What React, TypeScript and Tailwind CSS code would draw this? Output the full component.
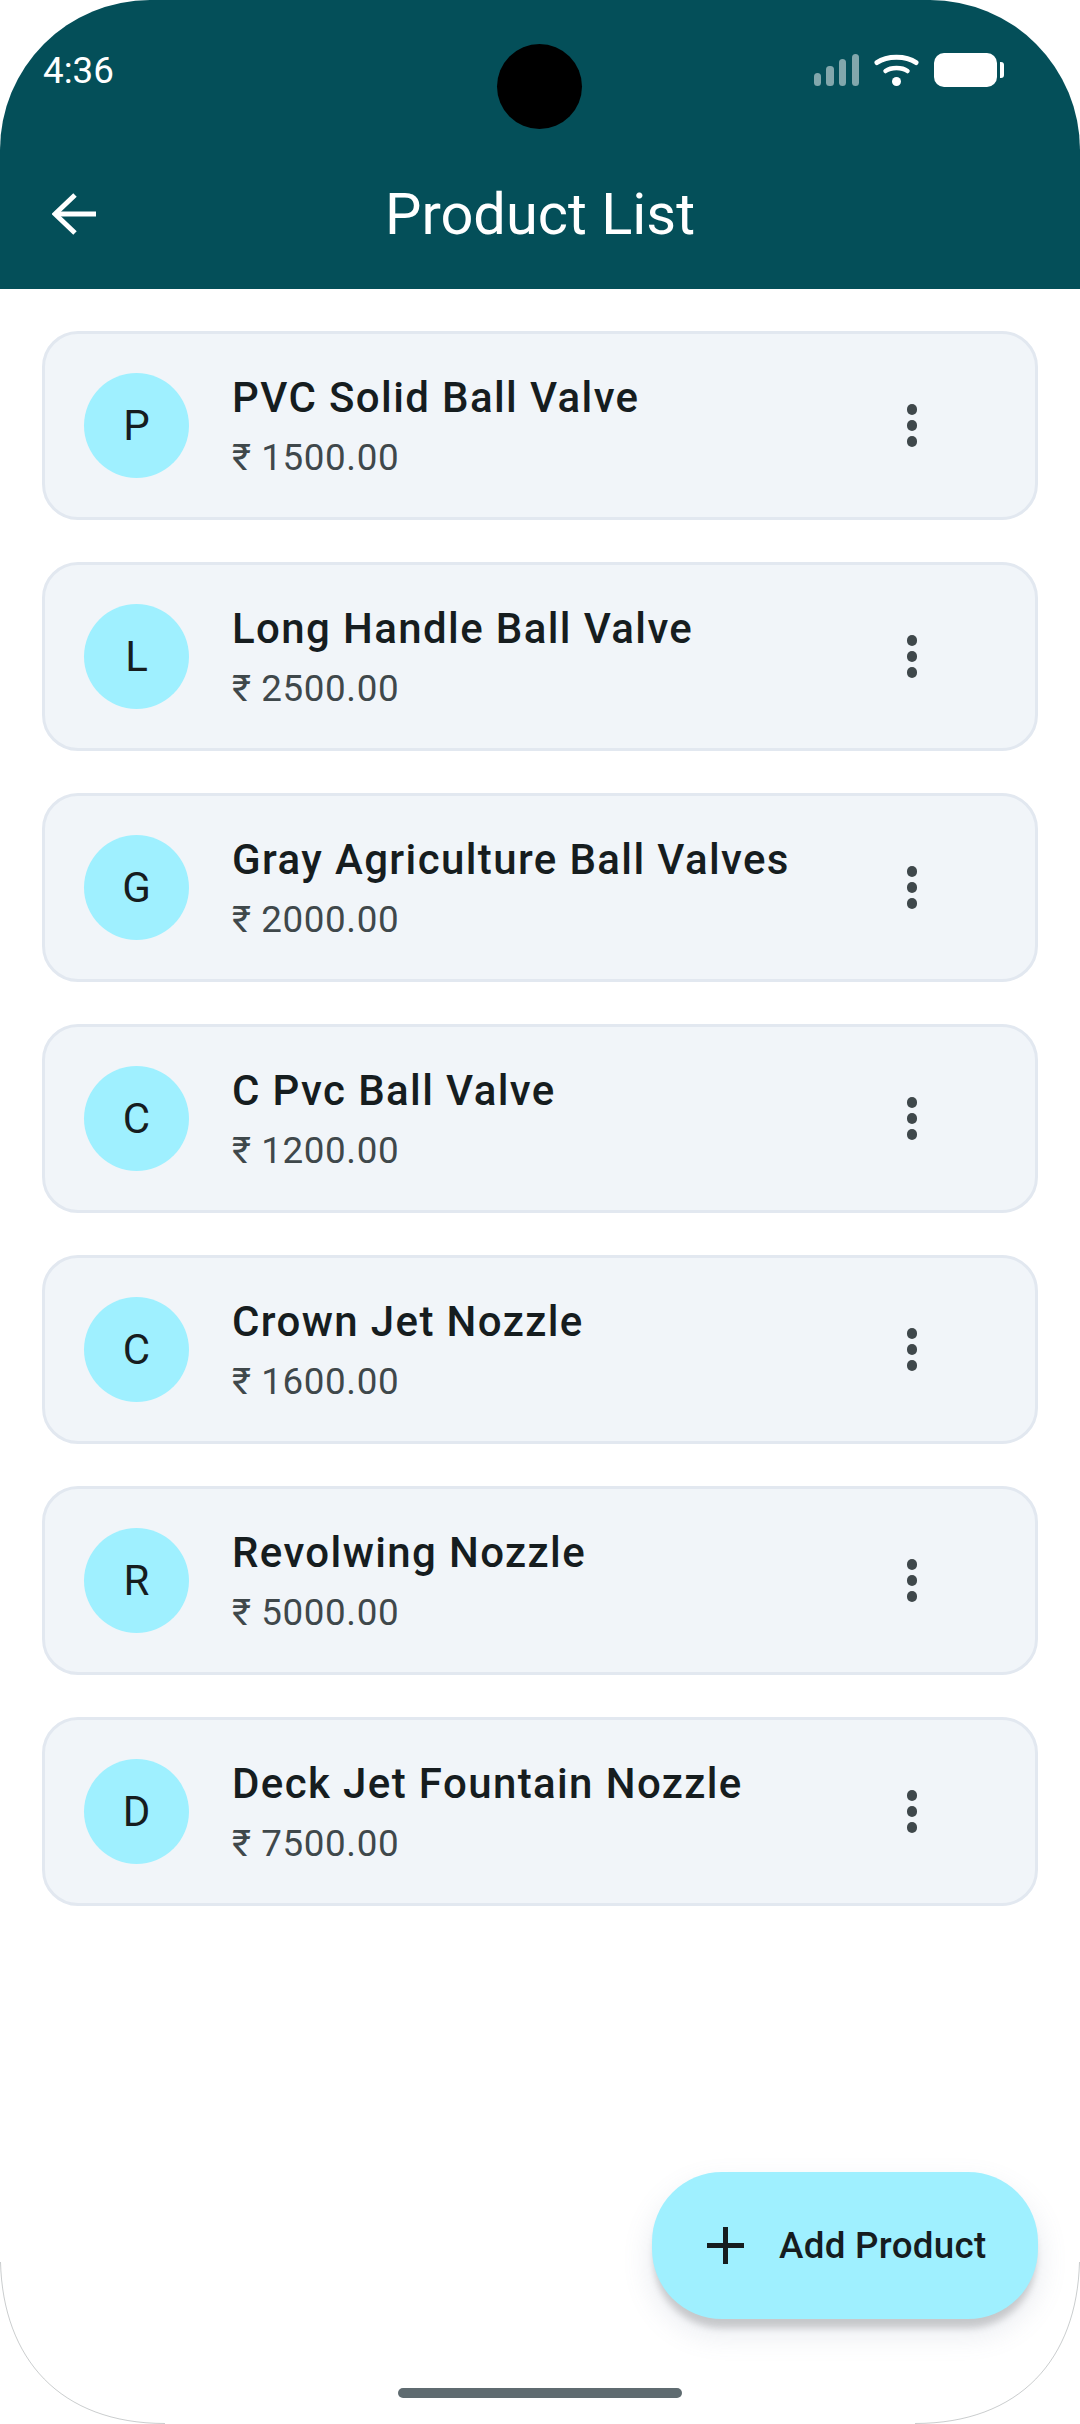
const products = [
  { l: "P", n: "PVC Solid Ball Valve", p: "1500.00" },
  { l: "L", n: "Long Handle Ball Valve", p: "2500.00" },
  { l: "G", n: "Gray Agriculture Ball Valves", p: "2000.00" },
  { l: "C", n: "C Pvc Ball Valve", p: "1200.00" },
  { l: "C", n: "Crown Jet Nozzle", p: "1600.00" },
  { l: "R", n: "Revolwing Nozzle", p: "5000.00" },
  { l: "D", n: "Deck Jet Fountain Nozzle", p: "7500.00" },
];

function StatusIcons() {
  return (
    <svg width="191" height="36" viewBox="0 0 191 36" className="block">
      <g fill="#ffffff" fillOpacity="0.5">
        <rect x="0" y="20" width="7" height="13" rx="3.5" />
        <rect x="12" y="13" width="8" height="20" rx="3.5" />
        <rect x="25" y="6" width="7" height="27" rx="3.5" />
        <rect x="38" y="1" width="7" height="32" rx="3.5" />
      </g>
      <g fill="none" stroke="#ffffff" strokeLinecap="round">
        <path d="M63 9.5 C73 2.5 92 2.5 102 9.5" strokeWidth="5" />
        <path d="M71.5 18 C77 14 88 14 93.5 18" strokeWidth="4.5" />
      </g>
      <circle cx="82.5" cy="28.5" r="4.5" fill="#ffffff" />
      <rect x="120" y="0" width="63" height="34" rx="10" fill="#ffffff" />
      <path d="M186 9 h1 q3 0 3 3 v10 q0 3 -3 3 h-1 z" fill="#ffffff" />
    </svg>
  );
}

function Card({ l, n, p }: { l: string; n: string; p: string }) {
  return (
    <div className="flex h-[189px] items-center rounded-[36px] border-[3px] border-[#e2e8f0] bg-[#f1f5f9] pl-[39px] pr-[118px]">
      <div className="flex h-[105px] w-[105px] shrink-0 items-center justify-center rounded-full bg-[#9ff0ff] text-[42px] leading-none text-[#161d1f]">
        {l}
      </div>
      <div className="ml-[43px] flex-1">
        <div className="text-[42px] font-medium leading-[58px] tracking-[1.38px] text-[#161d1f]">{n}</div>
        <div className="mt-[6px] text-[36.75px] leading-[50px] tracking-[0.6px] text-[#3f484b]">₹ {p}</div>
      </div>
      <div className="flex flex-col gap-[5.5px]">
        <span className="h-[10.5px] w-[10.5px] rounded-full bg-[#3f484b]" />
        <span className="h-[10.5px] w-[10.5px] rounded-full bg-[#3f484b]" />
        <span className="h-[10.5px] w-[10.5px] rounded-full bg-[#3f484b]" />
      </div>
    </div>
  );
}

export default function App() {
  return (
    <div className="relative h-[2424px] w-[1080px] overflow-hidden bg-white font-['Roboto',sans-serif]">
      <header className="relative h-[289px] rounded-t-[150px] bg-[#044f59] text-white">
        <div className="flex items-start justify-between pl-[43px] pr-[75px] pt-[53px]">
          <span className="text-[36.75px] leading-[36px]">4:36</span>
          <StatusIcons />
        </div>
        <div className="absolute left-[497px] top-[44px] h-[85px] w-[85px] rounded-full bg-black" />
        <div className="relative mt-[89px] flex h-[72px] items-center justify-center">
          <svg width="44" height="42" viewBox="0 0 44 42" className="absolute left-[52px] top-[15px]" fill="none" stroke="#ffffff" strokeWidth="5">
            <path d="M23 2 L3 21 L23 40" />
            <path d="M3 21 H44" />
          </svg>
          <span className="text-[57.75px] leading-[72px]">Product List</span>
        </div>
      </header>

      <main className="flex flex-col gap-[42px] pl-[42px] pr-[42px] pt-[42px]">
        {products.map((x, i) => (
          <Card key={i} {...x} />
        ))}
      </main>

      <button className="absolute left-[652px] top-[2172px] flex h-[147px] w-[386px] items-center rounded-[70px] bg-[#9ff0ff] pl-[55px] text-[36.75px] font-medium tracking-[0.3px] text-[#161d1f] shadow-[0_11px_7px_-2px_rgba(0,0,0,0.17),0_14px_26px_5px_rgba(110,125,160,0.12)]">
        <svg width="37" height="37" viewBox="0 0 37 37" fill="none" stroke="#161d1f" strokeWidth="5">
          <path d="M18.5 0 V37 M0 18.5 H37" />
        </svg>
        <span className="ml-[35px] mt-[2px] leading-none">Add Product</span>
      </button>

      <div className="absolute left-[398px] top-[2388px] h-[10px] w-[284px] rounded-full bg-[#5f6b70]" />

      <svg width="1080" height="170" viewBox="0 0 1080 170" className="pointer-events-none absolute bottom-0 left-0" fill="none" stroke="#1f2a2e" strokeOpacity="0.4" strokeWidth="0.6">
        <path d="M0.5 8 C3 105 60 169.5 165 169.5" />
        <path d="M1079.5 8 C1077 105 1020 169.5 915 169.5" />
      </svg>
    </div>
  );
}
